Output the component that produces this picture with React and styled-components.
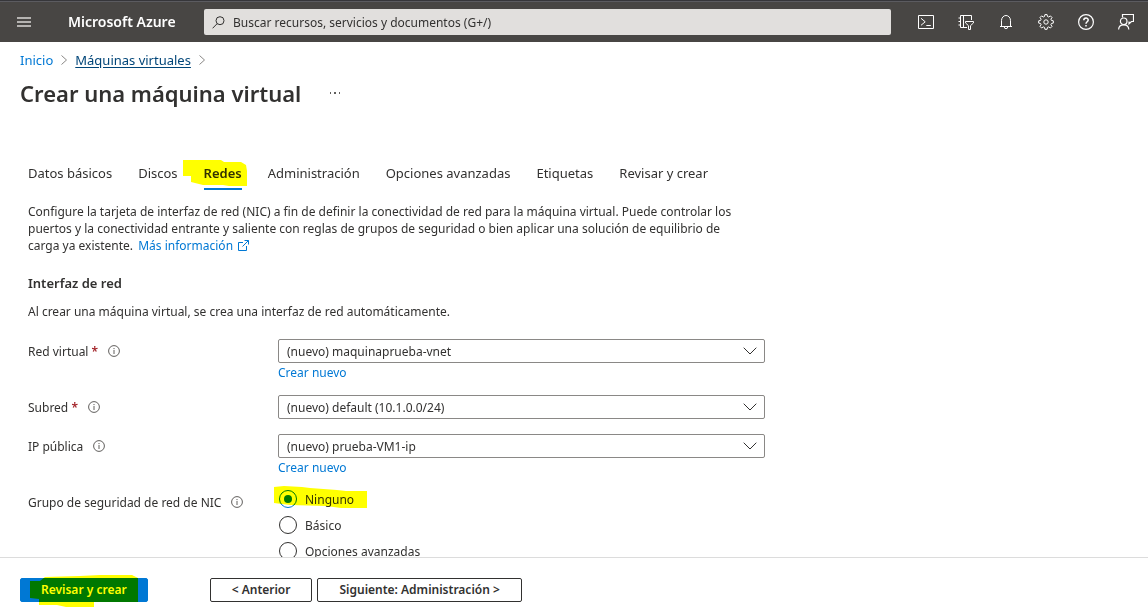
import React from "react";
import styled, { createGlobalStyle } from "styled-components";

const GlobalStyle = createGlobalStyle`
  *, *::before, *::after { box-sizing: border-box; }
  body {
    margin: 0;
    background: #fff;
    color: #323130;
    font: 12px/17px "Noto Sans", "Open Sans", sans-serif;
  }
  button, input, select { font: inherit; color: inherit; }
  a { color: #0078d4; text-decoration: none; }
  h1, h2, p, ol { margin: 0; padding: 0; }
`;

const Shell = styled.div`
  display: flex;
  flex-direction: column;
  height: 100vh;
`;

const TopBar = styled.header`
  display: flex;
  align-items: center;
  flex: none;
  height: 42px;
  padding: 2px 2px 0 16px;
  background: #484644;
  box-shadow: inset 0 1px #36363a, inset 0 2px #5b5b60;
`;

const MenuButton = styled.button`
  display: flex;
  width: 16px;
  padding: 0;
  border: 0;
  background: none;
`;

const Brand = styled.a`
  width: 136px;
  margin-left: 36px;
  color: #fff;
  font-size: 14px;
  font-weight: 600;
  line-height: 20px;
`;

const SearchBox = styled.label`
  display: flex;
  flex: 1;
  align-items: center;
  gap: 8px;
  height: 26px;
  padding: 0 8px;
  border-radius: 2px;
  background: #e1dfdd;
`;

const SearchInput = styled.input`
  flex: 1;
  min-width: 0;
  padding: 0;
  border: 0;
  outline: 0;
  background: none;
  &::placeholder { color: #323130; opacity: 1; }
`;

const Tools = styled.nav`
  display: flex;
  margin-left: 15px;
`;

const ToolButton = styled.button`
  display: flex;
  align-items: center;
  justify-content: center;
  width: 40px;
  height: 40px;
  padding: 0;
  border: 0;
  background: none;
`;

const Icon = styled.svg`
  display: block;
  flex: none;
  fill: none;
  stroke: ${(p) => p.$color || "#fff"};
  stroke-width: ${(p) => p.$weight || 1};
`;

const PageHead = styled.div`
  flex: none;
  padding: 8px 20px 0;
`;

const Breadcrumb = styled.nav`
  display: flex;
  align-items: center;
  gap: 7px;
  font-size: 13px;
  line-height: 20px;
`;

const Crumb = styled.a`
  ${(p) => p.$hovered && "color: #004578; text-decoration: underline; text-underline-offset: 2px;"}
`;

const TitleRow = styled.div`
  display: flex;
  align-items: center;
  gap: 28px;
  margin-top: 8px;
`;

const Title = styled.h1`
  font-size: 22px;
  font-weight: 600;
  line-height: 30px;
`;

const MoreButton = styled.button`
  display: flex;
  padding: 0;
  border: 0;
  background: none;
`;

const Content = styled.main`
  flex: 1;
  min-height: 0;
  overflow-y: auto;
  scrollbar-width: none;
  padding: 52px 28px 0;
`;

const Tabs = styled.nav`
  display: flex;
  gap: 26px;
  font-size: 13px;
`;

const Tab = styled.a`
  position: relative;
  height: 30px;
  padding-top: 3px;
  line-height: 20px;
  white-space: nowrap;
  color: #323130;
  border-bottom: 2px solid ${(p) => (p.$active ? "#0078d4" : "transparent")};
  font-weight: ${(p) => (p.$active ? 600 : 400)};
`;

const Marker = styled.svg`
  position: absolute;
  left: ${(p) => p.$left}px;
  top: ${(p) => p.$top}px;
  fill: #ff0;
  mix-blend-mode: multiply;
  pointer-events: none;
`;

const Form = styled.form`
  max-width: 737px;
`;

const Intro = styled.p`
  max-width: 725px;
  margin-top: 13px;
`;

const ExternalLink = styled.a`
  margin-left: 2px;
  svg { display: inline-block; margin-left: 5px; vertical-align: -1px; }
`;

const SectionTitle = styled.h2`
  margin-top: 19px;
  font-size: 13px;
  font-weight: 600;
  line-height: 20px;
`;

const SectionText = styled.p`
  margin: 10px 0 19px;
`;

const Field = styled.div`
  display: grid;
  grid-template-columns: 250px minmax(0, 1fr);
  margin-bottom: 15px;
`;

const FieldLabel = styled.div`
  display: flex;
  align-items: center;
  gap: 10px;
  height: 24px;
`;

const Required = styled.span`
  color: #a4262c;
  font-weight: 600;
`;

const SelectWrap = styled.div`
  position: relative;
  svg { position: absolute; right: 8px; top: 8px; pointer-events: none; }
`;

const Select = styled.select`
  appearance: none;
  display: block;
  width: 100%;
  height: 24px;
  padding: 0 28px 0 8px;
  border: 1px solid #8a8886;
  border-radius: 2px;
  background: #fff;
`;

const CreateLink = styled.a`
  display: block;
  width: fit-content;
  padding-top: 2px;
  line-height: 15px;
`;

const RadioList = styled.div`
  display: flex;
  flex-direction: column;
  align-items: flex-start;
  gap: 8px;
`;

const RadioOption = styled.label`
  position: relative;
  display: flex;
  align-items: center;
  gap: 8px;
  height: 18px;
`;

const Radio = styled.input`
  appearance: none;
  display: grid;
  place-items: center;
  width: 18px;
  height: 18px;
  margin: 0 0 0 1px;
  border: 1px solid #323130;
  border-radius: 50%;
  &:checked { border-color: #0078d4; }
  &:checked::before {
    content: "";
    width: 8px;
    height: 8px;
    border-radius: 50%;
    background: #0078d4;
  }
`;

const Footer = styled.footer`
  display: flex;
  flex: none;
  align-items: flex-start;
  gap: 5px;
  height: 50px;
  padding: 20px 20px 0;
  border-top: 1px solid #dcdcdc;
`;

const ActionButton = styled.button`
  position: relative;
  height: 24px;
  padding: 0 ${(p) => (p.$primary ? 20 : 21)}px;
  border: 1px solid ${(p) => (p.$primary ? "#0078d4" : "#323130")};
  border-radius: 2px;
  background: ${(p) => (p.$primary ? "#0078d4" : "#fff")};
  color: ${(p) => (p.$primary ? "#fff" : "#323130")};
  font-weight: 600;
  line-height: 20px;
  white-space: nowrap;
  margin-right: ${(p) => (p.$primary ? 57 : 0)}px;
`;

const CrumbChevron = () => (
  <Icon width="8" height="12" viewBox="0 0 8 12" $color="#8a8886" aria-hidden="true">
    <path d="M1.5 1.5 6.5 6l-5 4.5" />
  </Icon>
);

const InfoIcon = () => (
  <Icon width="12" height="12" viewBox="0 0 12 12" $color="#605e5c" role="img" aria-label="Información">
    <circle cx="6" cy="6" r="5.4" />
    <path d="M6 5v4M6 3v1.1" />
  </Icon>
);

const tools = [
  ["Cloud Shell", <><path d="M.5 1.5h15v13H.5z" /><path d="m3 4.3 4.2 3.5L3 11.3M8.3 11.5h4.5" /></>],
  ["Directorios y suscripciones", <><path d="M13.5 6V1.5h-11v12H9M5.5 1.5v12M.5 4h2M.5 7.500h2M.5 11h2" /><path d="M7.500 7.500h8v1.400l-3 2.800v3.800h-2v-3.800l-3-2.800z" /></>],
  ["Notificaciones", <><path d="M3.500 12.500v-6a4.500 5 0 0 1 9 0v6M2 12.500h12M6.300 13a1.700 1.700 0 0 0 3.400 0" /></>],
  ["Configuración", <><circle cx="8" cy="8" r="2.200" /><path d="m6.900.6 2.200 0 .4 1.900 1.200.5 1.700-1.100 1.600 1.600-1.100 1.700.5 1.200 1.900.4v2.300l-1.900.4-.5 1.200 1.100 1.700-1.600 1.600-1.700-1.100-1.200.5-.4 1.900H6.900l-.4-1.900-1.200-.5L3.600 14 2 12.400l1.100-1.700-.5-1.200L.7 9.100V6.800l1.900-.4.5-1.200L2 3.500l1.600-1.600L5.300 3l1.200-.5z" /></>],
  ["Ayuda", <><circle cx="8" cy="8" r="7.400" strokeWidth="1.200" /><path strokeWidth="1.500" d="M5.800 6.300C5.800 3.200 10.200 3.300 10.200 6c0 1.700-2.200 1.800-2.200 3.700M8 11v1.500" /></>],
  ["Comentarios", <><path strokeWidth="1.200" d="M4.500 3.500v-3h11v7h-2l-2.500 2.300V7.500" /><circle cx="5.700" cy="7.300" r="3.300" strokeWidth="1.200" /><path strokeWidth="1.200" d="M.6 15.500c.3-6.200 9.900-6.200 10.200 0" /></>],
];

const tabs = ["Datos básicos", "Discos", "Redes", "Administración", "Opciones avanzadas", "Etiquetas", "Revisar y crear"];

const fields = [
  { id: "vnet", label: "Red virtual", required: true, value: "(nuevo) maquinaprueba-vnet", create: true },
  { id: "subnet", label: "Subred", required: true, value: "(nuevo) default (10.1.0.0/24)" },
  { id: "ip", label: "IP pública", value: "(nuevo) prueba-VM1-ip", create: true },
];

const groups = ["Ninguno", "Básico", "Opciones avanzadas"];

export default function App() {
  return (
    <>
      <GlobalStyle />
      <Shell>
        <TopBar>
          <MenuButton type="button" aria-label="Menú">
            <Icon width="16" height="10" viewBox="0 0 16 10" $color="#b5b3b1" $weight={2}>
              <path d="M1 1h14M1 5h14M1 9h14" />
            </Icon>
          </MenuButton>
          <Brand href="#">Microsoft Azure</Brand>
          <SearchBox>
            <Icon width="13" height="13" viewBox="0 0 13 13" $color="#323130">
              <circle cx="8" cy="4.700" r="4" />
              <path d="M5.200 7.600.6 12.300" />
            </Icon>
            <SearchInput type="text" aria-label="Buscar" placeholder="Buscar recursos, servicios y documentos (G+/)" />
          </SearchBox>
          <Tools>
            {tools.map(([name, shape]) => (
              <ToolButton key={name} type="button" aria-label={name}>
                <Icon width="16" height="16" viewBox="0 0 16 16">{shape}</Icon>
              </ToolButton>
            ))}
          </Tools>
        </TopBar>

        <PageHead>
          <Breadcrumb>
            <Crumb href="#">Inicio</Crumb>
            <CrumbChevron />
            <Crumb href="#" $hovered>Máquinas virtuales</Crumb>
            <CrumbChevron />
          </Breadcrumb>
          <TitleRow>
            <Title>Crear una máquina virtual</Title>
            <MoreButton type="button" aria-label="Más">
              <svg width="12" height="2" viewBox="0 0 12 2" fill="#605e5c">
                <path d="M1 0h1v2H1zM5 0h2v2H5zM10 0h1v2h-1z" />
              </svg>
            </MoreButton>
          </TitleRow>
        </PageHead>

        <Content>
          <Tabs>
            {tabs.map((name) => (
              <Tab key={name} href="#" $active={name === "Redes"}>
                {name}
                {name === "Redes" && (
                  <Marker $left={-21} $top={0} width="66" height="28" viewBox="0 0 66 28">
                    <path d="M0 0h38l3 2h17l5 3 1 6v15H46l-6-1H20L8 22v-6H0z" />
                  </Marker>
                )}
              </Tab>
            ))}
          </Tabs>

          <Form>
            <Intro>
              Configure la tarjeta de interfaz de red (NIC) a fin de definir la conectividad de red para la máquina
              virtual. Puede controlar los puertos y la conectividad entrante y saliente con reglas de grupos de
              seguridad o bien aplicar una solución de equilibrio de carga ya existente.{" "}
              <ExternalLink href="#">
                Más información
                <Icon width="11" height="11" viewBox="0 0 11 11" $color="#0078d4" aria-hidden="true">
                  <path d="M5 2.500H.5v8h8V6M6.500.5h4v4M10.500.5 4.500 6.500" />
                </Icon>
              </ExternalLink>
            </Intro>
            <SectionTitle>Interfaz de red</SectionTitle>
            <SectionText>Al crear una máquina virtual, se crea una interfaz de red automáticamente.</SectionText>

            {fields.map((f) => (
              <Field key={f.id}>
                <FieldLabel>
                  <label htmlFor={f.id}>
                    {f.label} {f.required && <Required>*</Required>}
                  </label>
                  <InfoIcon />
                </FieldLabel>
                <div>
                  <SelectWrap>
                    <Select id={f.id}>
                      <option>{f.value}</option>
                    </Select>
                    <Icon width="14" height="8" viewBox="0 0 14 8" $color="#323130" aria-hidden="true">
                      <path d="m.7.7 6.300 6.300L13.300.7" />
                    </Icon>
                  </SelectWrap>
                  {f.create && <CreateLink href="#">Crear nuevo</CreateLink>}
                </div>
              </Field>
            ))}

            <Field role="radiogroup" aria-labelledby="nsg">
              <FieldLabel>
                <span id="nsg">Grupo de seguridad de red de NIC</span>
                <InfoIcon />
              </FieldLabel>
              <RadioList>
                {groups.map((name, i) => (
                  <RadioOption key={name}>
                    <Radio type="radio" name="nsg" defaultChecked={i === 0} />
                    {name}
                    {i === 0 && (
                      <Marker $left={-4} $top={-4} width="94" height="23" viewBox="0 0 94 23">
                        <path d="M0 1 10 0l18 1 8 1 27 2 9 1h21v17H67l-15-2-36-1-16-2z" />
                      </Marker>
                    )}
                  </RadioOption>
                ))}
              </RadioList>
            </Field>
          </Form>
        </Content>

        <Footer>
          <ActionButton type="button" $primary>
            Revisar y crear
            <Marker $left={9} $top={-4} width="110" height="32" viewBox="0 0 110 32">
              <path d="M0 6h10l5-4 35-1 20-1h32l6 3v24H64v5H36l-9-2H9v-6l-9-1z" />
            </Marker>
          </ActionButton>
          <ActionButton type="button">&lt; Anterior</ActionButton>
          <ActionButton type="button">Siguiente: Administración &gt;</ActionButton>
        </Footer>
      </Shell>
    </>
  );
}
